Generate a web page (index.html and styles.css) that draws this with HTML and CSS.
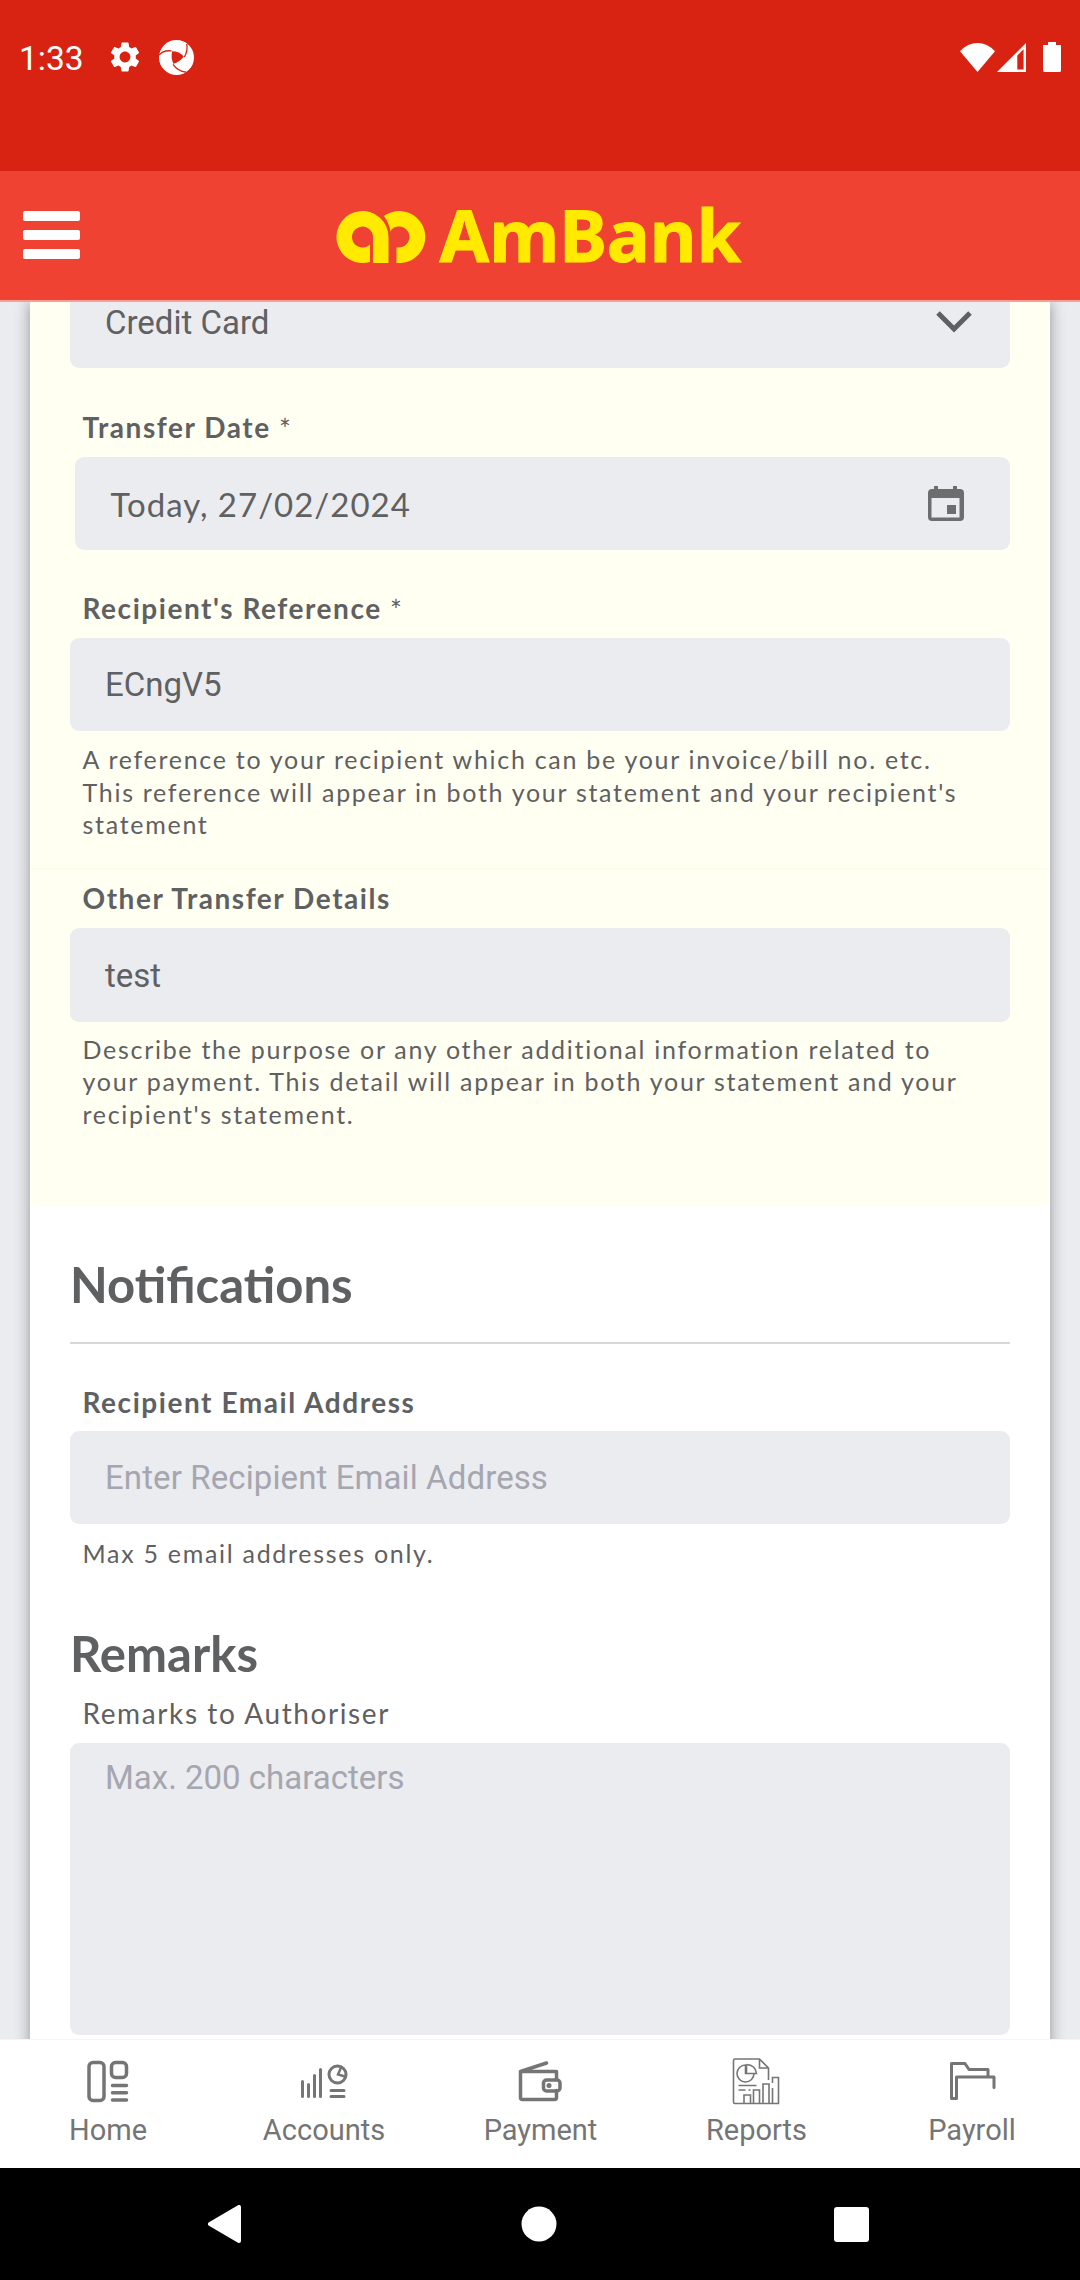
FILE: index.html
```html
<!DOCTYPE html>
<html lang="en">
<head>
<meta charset="utf-8">
<title>AmBank Transfer</title>
<link rel="stylesheet" href="styles.css">
</head>
<body>
<div class="phone">
  <div class="status">
    <span class="clock">1:33</span>
    <svg class="gear" width="36" height="36" viewBox="0 0 24 24"><path fill="#fff" d="M19.14 12.94c.04-.3.06-.61.06-.94 0-.32-.02-.64-.07-.94l2.03-1.58a.49.49 0 0 0 .12-.61l-1.92-3.32a.488.488 0 0 0-.59-.22l-2.39.96c-.5-.38-1.03-.7-1.62-.94l-.36-2.54a.484.484 0 0 0-.48-.41h-3.84c-.24 0-.43.17-.47.41l-.36 2.54c-.59.24-1.13.57-1.62.94l-2.39-.96c-.22-.08-.47 0-.59.22L2.74 8.87c-.12.21-.08.47.12.61l2.03 1.58c-.05.3-.09.63-.09.94s.02.64.07.94l-2.03 1.58a.49.49 0 0 0-.12.61l1.92 3.32c.12.22.37.29.59.22l2.39-.96c.5.38 1.03.7 1.62.94l.36 2.54c.05.24.24.41.48.41h3.84c.24 0 .44-.17.47-.41l.36-2.54c.59-.24 1.13-.56 1.62-.94l2.39.96c.22.08.47 0 .59-.22l1.92-3.32c.12-.22.07-.47-.12-.61l-2.01-1.58zM12 15.6c-1.98 0-3.6-1.62-3.6-3.6s1.62-3.6 3.6-3.6 3.6 1.62 3.6 3.6-1.62 3.6-3.6 3.6z"/></svg>
    <svg class="swirl" width="35" height="35" viewBox="0 0 36 36"><circle cx="18" cy="18" r="18" fill="#fff"/><g fill="none" stroke="#d82312" stroke-width="1.3"><path d="M0 15.5Q5 10 13 11.300"/><path d="M28.500 4Q30 11 26 17.500"/><path d="M14.500 25Q19 32 28 33"/></g><path fill="#d82312" d="M13.500 11.500Q21 11.500 25.500 17Q21 23 14.800 24.500Q12 18 13.500 11.500z"/></svg>
    <span class="grow"></span>
    <svg width="35" height="29" viewBox="0 0 36 30" preserveAspectRatio="none"><path fill="#fff" d="M0 8.500Q8 0 18 0T36 8.500L18 30z"/></svg>
    <svg class="cell" width="29" height="29" viewBox="0 0 30 30"><path fill="#fff" fill-rule="evenodd" d="M30 0V30H0zM21 13V27.500H27.500V6.500z"/></svg>
    <svg class="battery" width="18" height="30" viewBox="0 0 18 30"><path fill="#fff" d="M5 0h8v3h5v25.500q0 1.500-1.500 1.500h-15q-1.500 0-1.500-1.500V3h5z"/></svg>
  </div>
  <header class="header">
    <div class="burger"><i></i><i></i><i></i></div>
    <svg class="logo" width="416" height="90" viewBox="0 0 416 90">
      <g fill="#ffea00"><path d="M35 59.900A26 26 0 1 1 53.500 35V61H38V35A10.500 10.500 0 1 0 35 42.400z"/><path d="M49 14A26 26 0 1 1 61.500 60.900V45.200A10.500 10.500 0 1 0 56.500 27.600L55.700 29.700Q54 21 49 14z"/></g>
      <text class="brand" x="104.500" y="60" textLength="301.500" lengthAdjust="spacingAndGlyphs">AmBank</text>
    </svg>
  </header>
  <main class="content">
    <div class="card">
      <section class="transfer">
        <div class="field select"><span>Credit Card</span><svg width="36" height="22" viewBox="0 0 36 22"><path d="M2 2L18 18L34 2" fill="none" stroke="#5f6062" stroke-width="5"/></svg></div>
        <label class="label l-date">Transfer Date <span class="star">*</span></label>
        <div class="field date"><span>Today, 27/02/2024</span><svg width="36" height="36" viewBox="0 0 36 36"><path fill="#6b6d6f" fill-rule="evenodd" d="M6 0h4v3h15V0h4v3h3q4 0 4 4v24q0 4-4 4H4q-4 0-4-4V7q0-4 4-4h2zM3.500 12v19.500h28V12zM19 19h9v9h-9z"/></svg></div>
        <label class="label l-ref">Recipient's Reference <span class="star">*</span></label>
        <div class="field">ECngV5</div>
        <p class="hint tall">A reference to your recipient which can be your invoice/bill no. etc.<br>This reference will appear in both your statement and your recipient's<br>statement</p>
        <label class="label l-other">Other Transfer Details</label>
        <div class="field other">test</div>
        <p class="hint low">Describe the purpose or any other additional information related to<br>your payment. This detail will appear in both your statement and your<br>recipient's statement.</p>
      </section>
      <section class="notify">
        <h2 class="title">Notifications</h2>
        <label class="label l-mail">Recipient Email Address</label>
        <div class="field placeholder">Enter Recipient Email Address</div>
        <p class="hint">Max 5 email addresses only.</p>
        <h2 class="title remarks">Remarks</h2>
        <label class="label l-auth">Remarks to Authoriser</label>
        <div class="field area placeholder">Max. 200 characters</div>
      </section>
    </div>
  </main>
  <nav class="tabs">
    <a class="tab"><svg width="52" height="52" viewBox="0 0 52 52"><g fill="none" stroke="#757575" stroke-width="3.500" stroke-linecap="round"><rect x="7" y="6.500" width="15" height="38" rx="4"/><rect x="29.500" y="6.500" width="15" height="15" rx="4"/><path d="M30.500 29.500H44.500M30.500 36.800H44.500M30.500 44H44.500"/></g></svg>Home</a>
    <a class="tab"><svg width="52" height="52" viewBox="0 0 52 52"><g fill="none" stroke="#757575" stroke-width="3" stroke-linecap="round"><path d="M4.500 25.500V40.500M10.500 28.500V40.500M16.500 19.500V40.500M22.500 13.500V40.500M33 34.500H46M33 40.500H46"/><circle cx="39.500" cy="18.500" r="8.500"/><path d="M43 11.500L40 18.500L47 20.500" stroke-width="2.500"/></g></svg>Accounts</a>
    <a class="tab"><svg width="52" height="52" viewBox="-.5 -.5 52 52"><g fill="none" stroke="#757575" stroke-width="3.500" stroke-linecap="round" stroke-linejoin="round"><path d="M42 23V15H6V41q0 2 2 2H40q2 0 2-2V34M6 15L32 6.500"/><rect x="29" y="23.500" width="16.500" height="11" rx="3"/></g><circle cx="34.500" cy="29" r="2.500" fill="#757575"/></svg><span class="nudge">Payment</span></a>
    <a class="tab"><svg width="52" height="52" viewBox="-.5 0 52 52"><g fill="none" stroke="#757575" stroke-width="1.600"><path d="M38 24V12L29 3H4.500Q3 3 3 4.500V46Q3 47.500 4.500 47.500H48V21.500H42V27M29 3V12H38M13.500 47V39H20V47M23 47V34H29V47M32.500 47V28H38.500V47M42 32V47M8 29.500H26M8 34H15M18 34H20"/><path d="M15 9A8.500 8.500 0 1 0 23.500 17.500H15zM16 8.500V17.500H26Q25 9 16 8.500"/></g></svg><span class="nudge">Reports</span></a>
    <a class="tab"><svg width="52" height="52" viewBox="-1 -.5 52 52"><path fill="none" stroke="#757575" stroke-width="3" stroke-linejoin="round" stroke-linecap="round" d="M4.500 7V42H9.500V20.500H47V31M4.500 7H18L22 13H41V19"/></svg>Payroll</a>
  </nav>
  <div class="system">
    <svg width="34" height="38" viewBox="0 0 34 38"><path fill="#fff" stroke="#fff" stroke-width="4" stroke-linejoin="round" d="M2 19L31 2V36z"/></svg>
    <svg class="home-dot" width="36" height="36" viewBox="0 0 36 36"><circle cx="18" cy="18" r="17.500" fill="#fff"/></svg>
    <svg width="35" height="35" viewBox="0 0 35 35"><rect width="35" height="35" rx="3" fill="#fff"/></svg>
  </div>
</div>
</body>
</html>
```
FILE: styles.css
```css
* { box-sizing: border-box; }
body { margin: 0; background: #000; }
svg { display: block; flex: none; }
.phone { width: 1080px; height: 2280px; display: flex; flex-direction: column; overflow: hidden; font-family: Roboto, sans-serif; color: #5f6062; }
.status { height: 171px; flex: none; background: #d82312; display: flex; align-items: flex-start; padding: 43px 19px 0 19px; color: #fff; }
.clock { width: 90px; font-size: 33.5px; line-height: 33px; margin-top: -1px; }
.gear { margin: -4px 15px 0 -2px; }
.swirl { margin: -3px 0 0 1px; }
.grow { flex: 1; }
.cell { margin: 0 17px 0 2px; }
.battery { margin-top: -1px; }
.header { height: 131px; flex: none; background: #ef4233; border-bottom: 2px solid #f89e97; display: flex; align-items: flex-start; }
.burger { width: 57px; margin: 40px 0 0 23px; display: flex; flex-direction: column; gap: 9px; }
.burger i { height: 10px; background: #fff; border-radius: 2px; }
.logo { margin: 31px 0 0 255px; overflow: visible; }
.brand { font: 700 72px "Noto Sans", sans-serif; fill: #ffea00; stroke: #ffea00; stroke-width: 1px; }
.content { height: 1737px; flex: none; overflow: hidden; background: #ebecf0; padding: 0 30px; }
.card { height: 1800px; background: #fff; box-shadow: 0 0 14px rgba(0, 0, 0, .38); }
.transfer { height: 903px; background: #fffff2; padding: 0 40px; }
.notify { padding: 0 40px; display: flow-root; }
.field { height: 93px; border-radius: 9px; background: #ebecf0; padding: 0 35px; line-height: 93px; font-size: 33px; white-space: nowrap; }
.select { height: 66px; border-radius: 0 0 9px 9px; line-height: 42px; display: flex; justify-content: space-between; padding-right: 38px; }
.select svg { margin-top: 9px; }
.date { margin-left: 5px; font-family: Lato, sans-serif; letter-spacing: 1px; display: flex; justify-content: space-between; align-items: center; padding: 0 46px 0 35.5px; }
.date span { padding-top: 2px; }
.other { height: 94px; line-height: 95px; }
.placeholder { color: #a5a6af; letter-spacing: .1px; }
.label { display: block; font: 700 28px/34px Lato, sans-serif; letter-spacing: 1.55px; padding-left: 12.5px; white-space: nowrap; }
.star { font-weight: 400; position: relative; top: 2px; }
.l-date { padding-top: 42px; height: 89px; }
.l-ref { padding-top: 41px; height: 88px; }
.hint { margin: 0; padding: 12px 0 0 12.5px; height: 108px; font: 400 25px/32.5px Lato, sans-serif; letter-spacing: 1.71px; white-space: nowrap; }
.tall { height: 137px; }
.low { padding-top: 10.5px; }
.l-other { border-top: 1px solid #fffce6; margin: 0 -40px; padding: 12px 0 0 52.5px; height: 60px; }
.title { margin: 0; height: 139px; border-bottom: 2px solid #d6d7d8; font: 700 49px/60px Lato, sans-serif; padding-top: 49px; }
.l-mail { padding-top: 41px; height: 87px; }
.notify .hint { height: 98px; padding-top: 13px; }
.remarks { border: 0; padding-top: 1px; height: 72px; }
.l-auth { font-weight: 400; height: 49px; padding-top: 2px; letter-spacing: 1.6px; }
.area { height: 292px; line-height: 70px; letter-spacing: 0; }
.tabs { height: 129px; flex: none; background: #fff; border-top: 1px solid #f5f5f6; display: grid; grid-template-columns: repeat(5, 1fr); }
.tab { display: flex; flex-direction: column; align-items: center; padding-top: 16px; color: #757575; font-size: 29px; line-height: 44px; }
.nudge { padding-left: 1px; }
.system { height: 112px; display: grid; grid-template-columns: repeat(3, 1fr); place-items: center; background: #000; padding: 0 72px 0 68px; }
.home-dot { margin-left: 2px; }
```
